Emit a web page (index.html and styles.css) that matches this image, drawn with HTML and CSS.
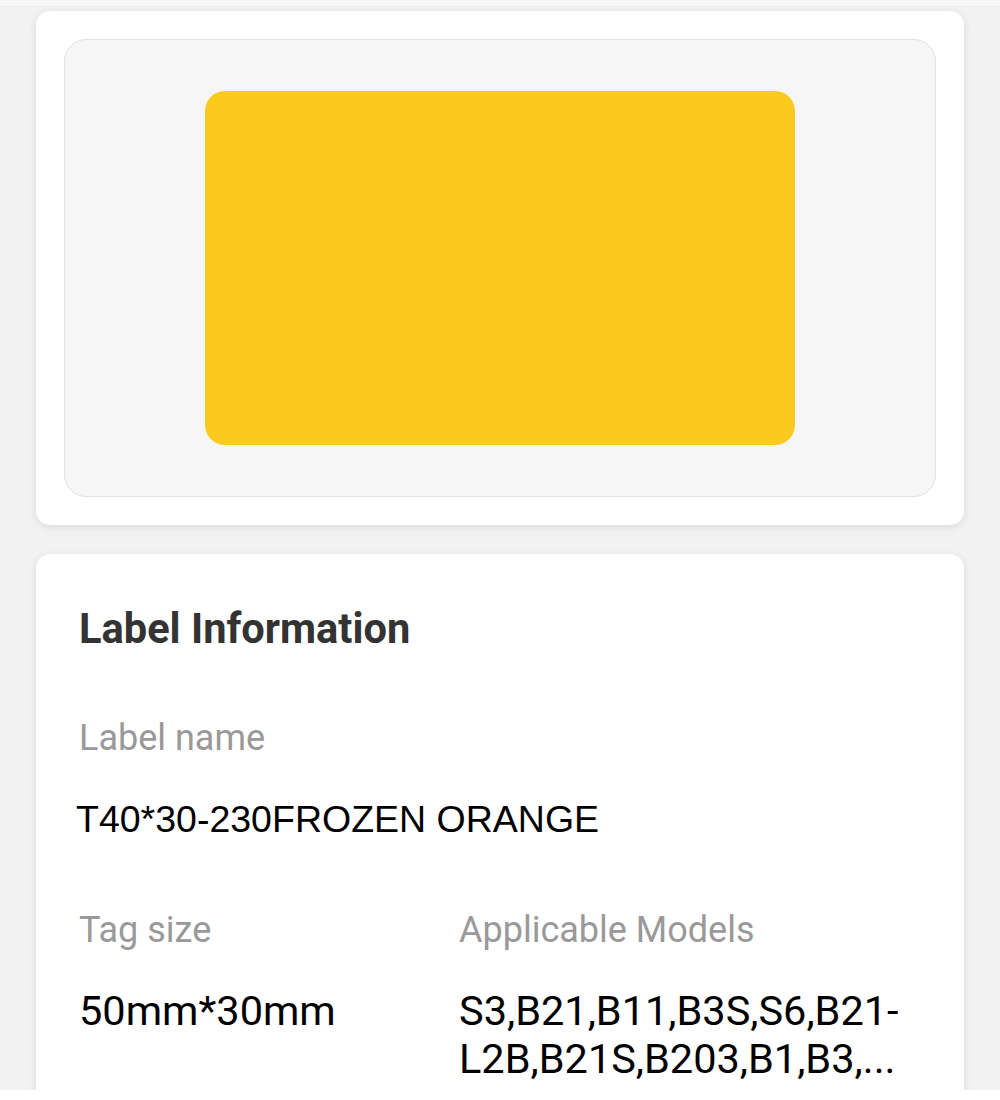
FILE: index.html
```html
<!DOCTYPE html>
<html>
<head>
<meta charset="utf-8">
<link rel="stylesheet" href="styles.css">
</head>
<body>
<div class="screen">
  <div class="topline"></div>
  <section class="card preview-card">
    <div class="preview">
      <div class="label-swatch"></div>
    </div>
  </section>
  <section class="card info-card">
    <h2 class="title">Label Information</h2>
    <div class="field-label">Label name</div>
    <div class="name-value">T40*30-230FROZEN ORANGE</div>
    <div class="grid">
      <div class="col">
        <div class="field-label">Tag size</div>
        <div class="value">50mm*30mm</div>
      </div>
      <div class="col">
        <div class="field-label">Applicable Models</div>
        <div class="value models">S3,B21,B11,B3S,S6,B21-L2B,B21S,B203,B1,B3,...</div>
      </div>
    </div>
  </section>
</div>
</body>
</html>
```
FILE: styles.css
```css
html, body {
  margin: 0;
  padding: 0;
  background: #ffffff;
}
.screen {
  height: 1090px;
  overflow: hidden;
  background: #f2f2f2;
  padding: 0 36px;
  box-sizing: border-box;
  font-family: Roboto, "Liberation Sans", sans-serif;
}
.topline {
  height: 6px;
  background: #f7f7f7;
  border-bottom: 1px solid #ececec;
  margin: 0 -36px 4px;
}
.card {
  background: #ffffff;
  border-radius: 14px;
  box-shadow: 0 2px 8px rgba(0, 0, 0, 0.10);
}
.preview-card {
  padding: 28px;
  height: 514px;
  box-sizing: border-box;
}
.preview {
  height: 458px;
  box-sizing: border-box;
  background: #f6f6f6;
  border: 1px solid #e2e2e2;
  border-radius: 22px;
  display: flex;
  justify-content: center;
  padding-top: 51px;
}
.label-swatch {
  width: 590px;
  height: 354px;
  background: #fbca1f;
  border-radius: 20px;
}
.info-card {
  margin-top: 29px;
  height: 600px;
  padding: 45px 43px 0;
}
.title {
  margin: 0;
  font-size: 41.6px;
  font-weight: 700;
  color: #333333;
  line-height: 60px;
}
.field-label {
  font-size: 36px;
  color: #999999;
  line-height: 48px;
}
.info-card > .field-label {
  margin-top: 55px;
}
.name-value {
  margin-top: 33px;
  margin-left: -3px;
  font-family: "Liberation Sans", Arial, sans-serif;
  font-size: 37.5px;
  color: #000000;
  line-height: 48px;
}
.grid {
  display: grid;
  grid-template-columns: 380px 1fr;
  margin-top: 63px;
}
.value {
  margin-top: 33px;
  font-size: 41.5px;
  color: #000000;
  line-height: 48px;
}
.models {
  width: 462px;
}
```
